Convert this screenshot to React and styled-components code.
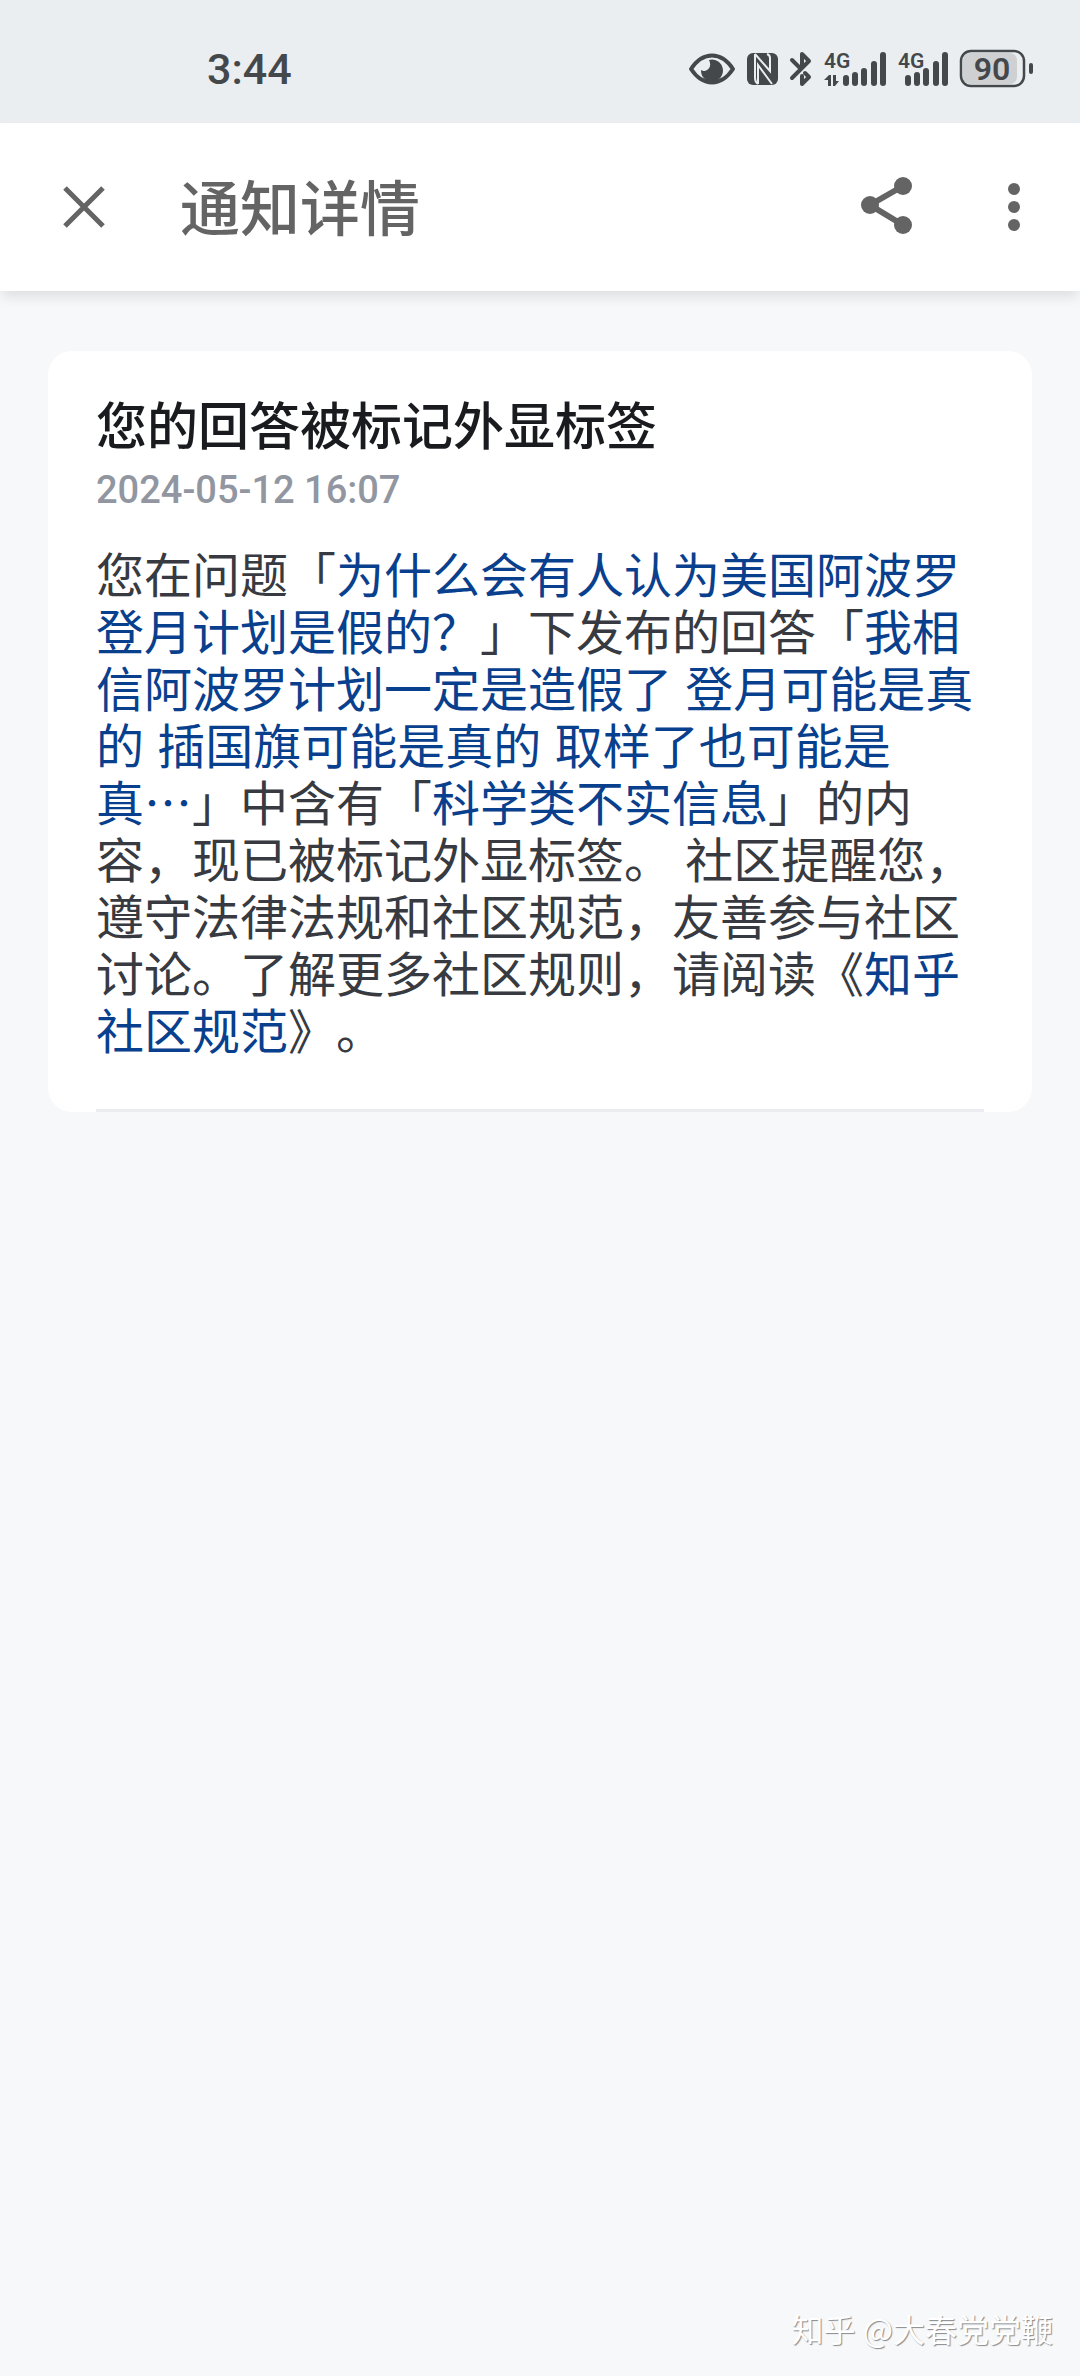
import React from "react"
import styled, { createGlobalStyle } from "styled-components"

const Colors = {
  PAGE: "#f7f8fa",
  STATUS_BG: "#ebeef1",
  STATUS: "#44484b",
  HEADER: "#646464",
  TITLE: "#191b1f",
  TEXT: "#373a40",
  MUTED: "#9196a1",
  LINK: "#09408e",
  WHITE: "#ffffff",
}

const GlobalStyle = createGlobalStyle`
  * {
    box-sizing: border-box;
  }
  body {
    margin: 0;
    background: ${Colors.PAGE};
    font-family: "Noto Sans CJK SC", sans-serif;
    text-spacing-trim: space-all;
  }
`

const Page = styled.div`
  display: flex;
  flex-direction: column;
  min-height: 100vh;
`

const StatusBar = styled.div`
  display: flex;
  align-items: center;
  justify-content: space-between;
  height: 123px;
  padding: 14px 46px 0 207px;
  background: ${Colors.STATUS_BG};
  color: ${Colors.STATUS};
  font-family: Roboto, sans-serif;
  font-weight: 500;
`

const Time = styled.time`
  font-size: 43px;
  line-height: 48px;
`

const StatusIcons = styled.div`
  display: flex;
  align-items: center;
  gap: 12px;

  svg {
    display: block;
    overflow: visible;
  }
`

const Header = styled.header`
  display: flex;
  align-items: center;
  height: 168px;
  padding: 0 36px 0 54px;
  background: ${Colors.WHITE};
  box-shadow: 0 8px 12px -2px rgba(0, 0, 0, 0.1);
  color: ${Colors.HEADER};
`

const HeaderTitle = styled.h1`
  flex: 1;
  margin: 0 0 0 66px;
  padding-bottom: 4px;
  font-size: 60px;
  font-weight: 500;
  line-height: 84px;
`

const IconButton = styled.button`
  display: flex;
  padding: 0;
  margin-left: ${({ $gap }) => $gap || 0};
  border: none;
  background: none;
  color: inherit;
  cursor: pointer;
`

const Card = styled.article`
  margin: 60px 48px 0;
  padding: 34px 48px 0;
  border-radius: 24px;
  background: ${Colors.WHITE};
`

const CardTitle = styled.h2`
  margin: 0;
  color: ${Colors.TITLE};
  font-size: 51px;
  font-weight: 500;
  line-height: 76px;
`

const CardDate = styled.time`
  display: block;
  padding-top: 2px;
  color: ${Colors.MUTED};
  font-family: Roboto, sans-serif;
  font-size: 38px;
  font-weight: 500;
  line-height: 54px;
`

const CardText = styled.p`
  margin: 31px 0 0;
  padding-bottom: 48px;
  border-bottom: 3px solid #ebecef;
  color: ${Colors.TEXT};
  font-family: "Liberation Sans", "Noto Sans CJK SC", sans-serif;
  font-size: 48px;
  line-height: 57px;
`

const TextLink = styled.a`
  color: ${Colors.LINK};
  text-decoration: none;
`

// full-width dots, centred on the line
const Ellipsis = styled.span`
  font-family: "Noto Sans CJK SC", sans-serif;
  line-height: 1;
`

const Watermark = styled.footer`
  margin-top: auto;
  padding: 0 27px 24px;
  color: ${Colors.WHITE};
  font-size: 32px;
  line-height: 48px;
  text-align: right;
  text-shadow: 1px 1px 1px rgba(0, 0, 0, 0.45);
`

const EyeIcon = () => (
  <svg width="46" height="32" viewBox="0 0 46 32" fill="none">
    <path d="M2 16C8 7 15 2.500 23 2.500S38 7 44 16C38 25 31 29.500 23 29.500S8 25 2 16Z" stroke="currentColor" strokeWidth="4" strokeLinejoin="round" />
    <path d="M20 7a11 11 0 1 1-8 10c5 3 12-2 8-10Z" fill="currentColor" />
  </svg>
)

const NfcIcon = () => (
  <svg width="31" height="32" viewBox="0 0 31 32">
    <rect width="31" height="32" rx="6" fill="currentColor" />
    <path d="M8 1v24q0 4 3 6M8 1l15 17V5q0-3-3-4M11 31V12l14 19" fill="none" stroke={Colors.STATUS_BG} strokeWidth="2" />
  </svg>
)

const BluetoothIcon = () => (
  <svg width="22" height="34" viewBox="0 0 22 34" fill="none" stroke="currentColor" strokeWidth="4" strokeLinejoin="round" strokeLinecap="round">
    <path d="M2 8L11 17M2 26L19 9L12 2V14M12 24V32L19 25L15 21" />
  </svg>
)

const SignalIcon = ({ width, bars, data }) => (
  <svg width={width} height="34" viewBox={`0 0 ${width} 34`} fill="currentColor">
    <text x="0" y="16" fontSize="21" fontWeight="600">4G</text>
    {data && <path d="M0 28l5-5h2v11H4v-6ZM9 23h3v6h3l-4 5H9Z" />}
    {bars.map(([x, y]) => (
      <rect key={x} x={x} y={y} width="6" height={34 - y} rx="3" />
    ))}
  </svg>
)

const BatteryIcon = () => (
  <svg width="74" height="37" viewBox="0 0 74 37">
    <rect x="3" y="3" width="54" height="31" rx="7" fill="#cfd0d2" />
    <rect x="1" y="1" width="63" height="35" rx="10" fill="none" stroke="currentColor" strokeWidth="2.500" />
    <rect x="69" y="13" width="4" height="11" rx="2" fill="currentColor" />
    <text x="32" y="30" fontSize="32" fontWeight="600" textAnchor="middle" fill="currentColor">90</text>
  </svg>
)

const CloseIcon = () => (
  <svg width="60" height="60" viewBox="0 0 60 60" stroke="currentColor" strokeWidth="5">
    <path d="M11 11l38 38M49 11L11 49" />
  </svg>
)

const ShareIcon = () => (
  <svg width="60" height="60" viewBox="0 0 60 60" fill="currentColor">
    <path d="M46 9L13 28L46 48" fill="none" stroke="currentColor" strokeWidth="6" />
    <circle cx="46" cy="9" r="9" />
    <circle cx="13" cy="28" r="9" />
    <circle cx="46" cy="48" r="9" />
  </svg>
)

const MoreIcon = () => (
  <svg width="60" height="60" viewBox="0 0 60 60" fill="currentColor">
    <circle cx="30" cy="12" r="6" />
    <circle cx="30" cy="30" r="6" />
    <circle cx="30" cy="48" r="6" />
  </svg>
)

const App = () => (
  <Page>
    <GlobalStyle />
    <StatusBar>
      <Time>3:44</Time>
      <StatusIcons>
        <EyeIcon />
        <NfcIcon />
        <BluetoothIcon />
        <SignalIcon width={62} data bars={[[19, 23], [28, 20], [37, 16], [47, 9], [56, 0]]} />
        <SignalIcon width={50} bars={[[7, 23], [16, 20], [25, 16], [35, 9], [44, 0]]} />
        <BatteryIcon />
      </StatusIcons>
    </StatusBar>
    <Header>
      <IconButton type="button" aria-label="关闭"><CloseIcon /></IconButton>
      <HeaderTitle>通知详情</HeaderTitle>
      <IconButton type="button" aria-label="分享"><ShareIcon /></IconButton>
      <IconButton type="button" aria-label="更多" $gap="67px"><MoreIcon /></IconButton>
    </Header>
    <Card>
      <CardTitle>您的回答被标记外显标签</CardTitle>
      <CardDate>2024-05-12 16:07</CardDate>
      <CardText>
        您在问题「<TextLink href="#question">为什么会有人认为美国阿波罗登月计划是假的？</TextLink>」下发布的回答「<TextLink href="#answer">我相信阿波罗计划一定是造假了 登月可能是真的 插国旗可能是真的 取样了也可能是真<Ellipsis>…</Ellipsis></TextLink>」中含有「<TextLink href="#label">科学类不实信息</TextLink>」的内容，现已被标记外显标签。 社区提醒您，遵守法律法规和社区规范，友善参与社区讨论。了解更多社区规则，请阅读《<TextLink href="#rules">知乎社区规范</TextLink>》。
      </CardText>
    </Card>
    <Watermark>知乎 @大春党党鞭</Watermark>
  </Page>
)

export default App
